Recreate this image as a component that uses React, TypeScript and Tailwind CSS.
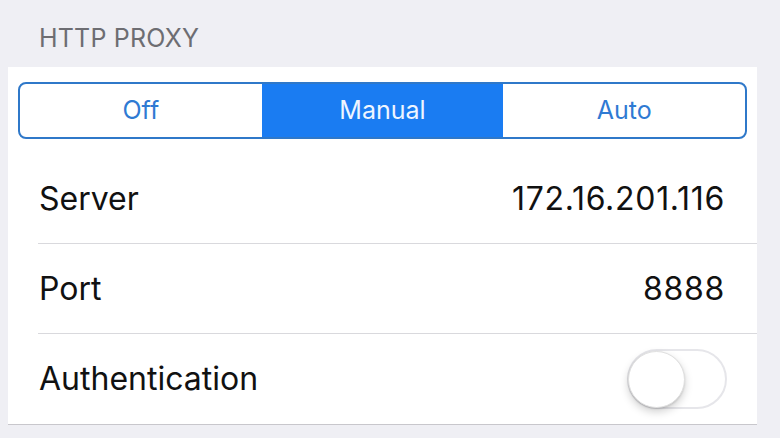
import React from "react";

function Row({ label, children, last }: { label: string; children: React.ReactNode; last?: boolean }) {
  return (
    <div className={`ml-[30px] h-[90px] flex items-center justify-between pr-[32px] ${last ? "" : "border-b border-[#d9d9dd]"}`}>
      <span className="pl-[1px] text-[32px] leading-none text-[#111111]">{label}</span>
      {children}
    </div>
  );
}

export default function App() {
  return (
    <div
      className="w-[780px] h-[438px] bg-[#efeff4] pl-[8px] pr-[23px] overflow-hidden"
      style={{ fontFamily: "Inter, 'Liberation Sans', sans-serif" }}
    >
      <div className="h-[67px] pt-[23px] pl-[31px]">
        <span className="text-[25px] leading-[30px] text-[#6d6d72] tracking-[0.2px]">HTTP PROXY</span>
      </div>
      <div className="bg-white border-b border-[#c8c7cc]">
        <div className="px-[10px] pt-[15px] pb-[15px]">
          <div className="flex h-[57px] rounded-[8px] border-2 border-[#2f78c9] overflow-hidden">
            <div className="flex-1 flex items-center justify-center text-[25px] text-[#2f7ad3]">Off</div>
            <div className="flex-1 flex items-center justify-center text-[25px] text-[#eef5ff] bg-[#1a7cf2]">Manual</div>
            <div className="flex-1 flex items-center justify-center text-[25px] text-[#2f7ad3]">Auto</div>
          </div>
        </div>
        <Row label="Server">
          <span className="text-[32px] leading-none text-[#111111] tracking-[0.7px]">172.16.201.116</span>
        </Row>
        <Row label="Port">
          <span className="text-[32px] leading-none text-[#111111] tracking-[0.7px]">8888</span>
        </Row>
        <Row label="Authentication" last>
          <div className="w-[100px] h-[60px] rounded-full border-2 border-[#e6e6ea] bg-white flex items-center mr-[-2px]">
            <div className="w-[57px] h-[57px] ml-[-1px] rounded-full bg-white border border-[#e0e0e0] shadow-[0_4px_8px_rgba(0,0,0,0.18),0_1px_2px_rgba(0,0,0,0.12)]" />
          </div>
        </Row>
      </div>
    </div>
  );
}
